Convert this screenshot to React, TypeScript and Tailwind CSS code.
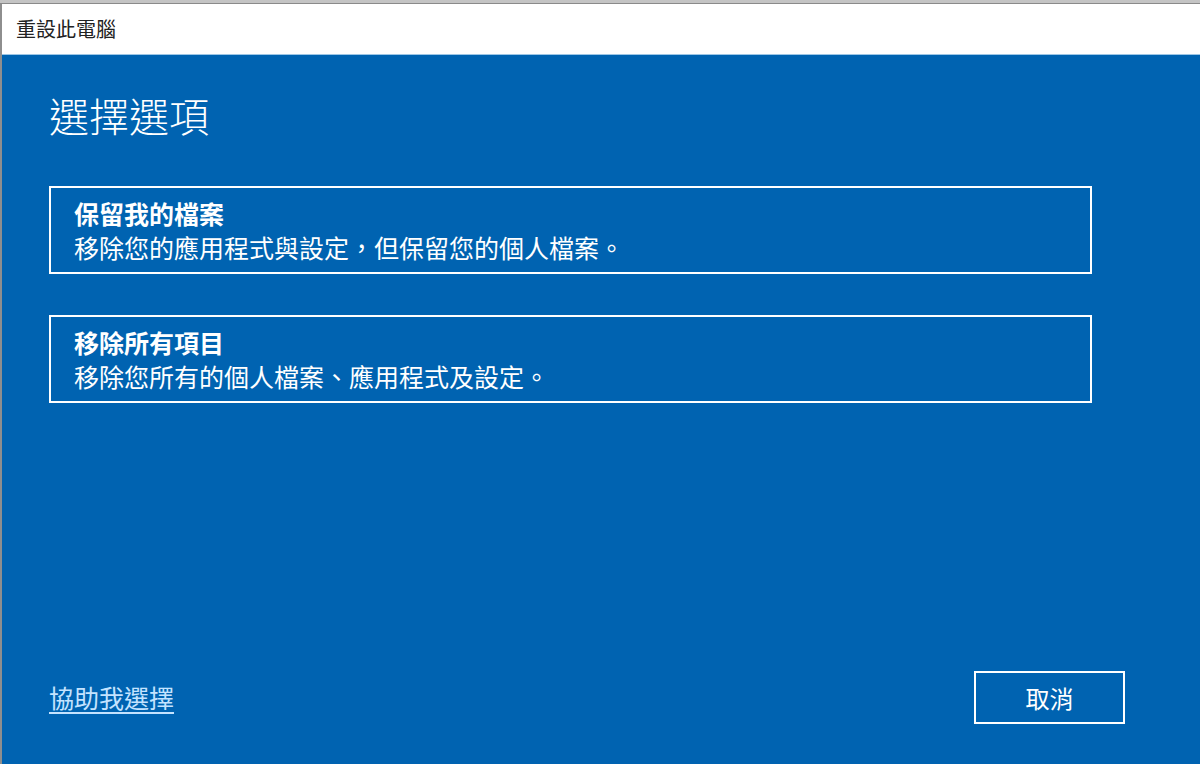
const font = { fontFamily: '"Noto Sans CJK TC", "Noto Sans", sans-serif' };

function OptionCard({ title, description }: { title: string; description: string }) {
  return (
    <div className="w-[1043px] border-2 border-white px-[23px] pt-[8px] pb-[8px] text-white">
      <div className="text-[25px] font-bold leading-[34px]">{title}</div>
      <div className="text-[25px] leading-[34px]">{description}</div>
    </div>
  );
}

export default function App() {
  return (
    <div className="flex h-[764px] w-[1200px] flex-col overflow-hidden bg-[#0063b1]" style={font}>
      <div className="h-[4px] border-b border-[#8a8a8a] bg-[#c4c4c4]" />
      <div className="flex flex-1 border-l-2 border-[#8e8e8e]">
        <div className="flex flex-1 flex-col">
          <div className="flex h-[51px] items-center border-b border-[#9cc6e6] bg-white pl-[14px]">
            <span className="text-[20px] leading-none text-[#222]">重設此電腦</span>
          </div>
          <div className="flex flex-1 flex-col pl-[47px] pr-[75px] pb-[40px]">
            <h1 className="mt-[32px] text-[40px] font-light leading-[56px] text-white">選擇選項</h1>
            <div className="mt-[43px] flex flex-col gap-[41px]">
              <OptionCard
                title="保留我的檔案"
                description="移除您的應用程式與設定，但保留您的個人檔案。"
              />
              <OptionCard
                title="移除所有項目"
                description="移除您所有的個人檔案、應用程式及設定。"
              />
            </div>
            <div className="mt-auto flex items-end justify-between">
              <a className="mb-[10px] text-[25px] leading-[34px] text-[#c4e3ff] underline underline-offset-[4px]">
                協助我選擇
              </a>
              <button className="flex h-[53px] w-[151px] items-center justify-center border-2 border-white text-[24px] text-white">
                取消
              </button>
            </div>
          </div>
        </div>
      </div>
    </div>
  );
}
